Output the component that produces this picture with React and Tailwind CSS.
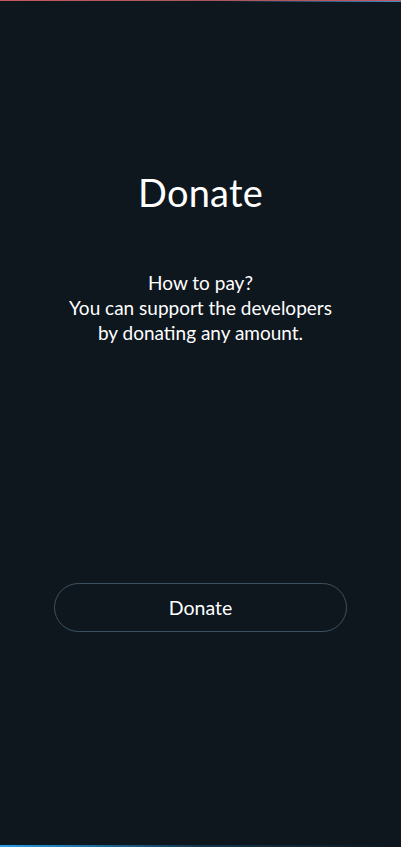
export default function App() {
  return (
    <div
      className="relative flex h-[847px] w-full flex-col items-center overflow-hidden bg-[#0e161e] text-white"
      style={{ fontFamily: "Lato, 'Open Sans', sans-serif" }}
    >
      {/* top accent */}
      <div className="absolute left-0 top-0 h-px w-full bg-gradient-to-r from-[#c8585c] via-[#a8585e] to-[#c0585c]" />
      <div className="absolute right-0 top-px h-px w-[45%] bg-gradient-to-r from-transparent to-[#3f8fd0]" />
      {/* bottom accent */}
      <div className="absolute bottom-0 left-0 h-[2px] w-full bg-gradient-to-r from-[#2a9ee6] via-[#1a4a6a]/60 to-transparent" />

      <h1 className="mt-[169px] text-[38px] font-normal leading-[46px] tracking-[0.2px]">Donate</h1>

      <div className="mt-[55px] text-center text-[19px] font-normal leading-[25px]">
        <p>How to pay?</p>
        <p>You can support the developers</p>
        <p>by donating any amount.</p>
      </div>

      <button className="mt-[238px] h-[49px] w-[293px] rounded-full border border-[#3c5260] text-[19.5px] font-normal text-white">
        Donate
      </button>
    </div>
  );
}
